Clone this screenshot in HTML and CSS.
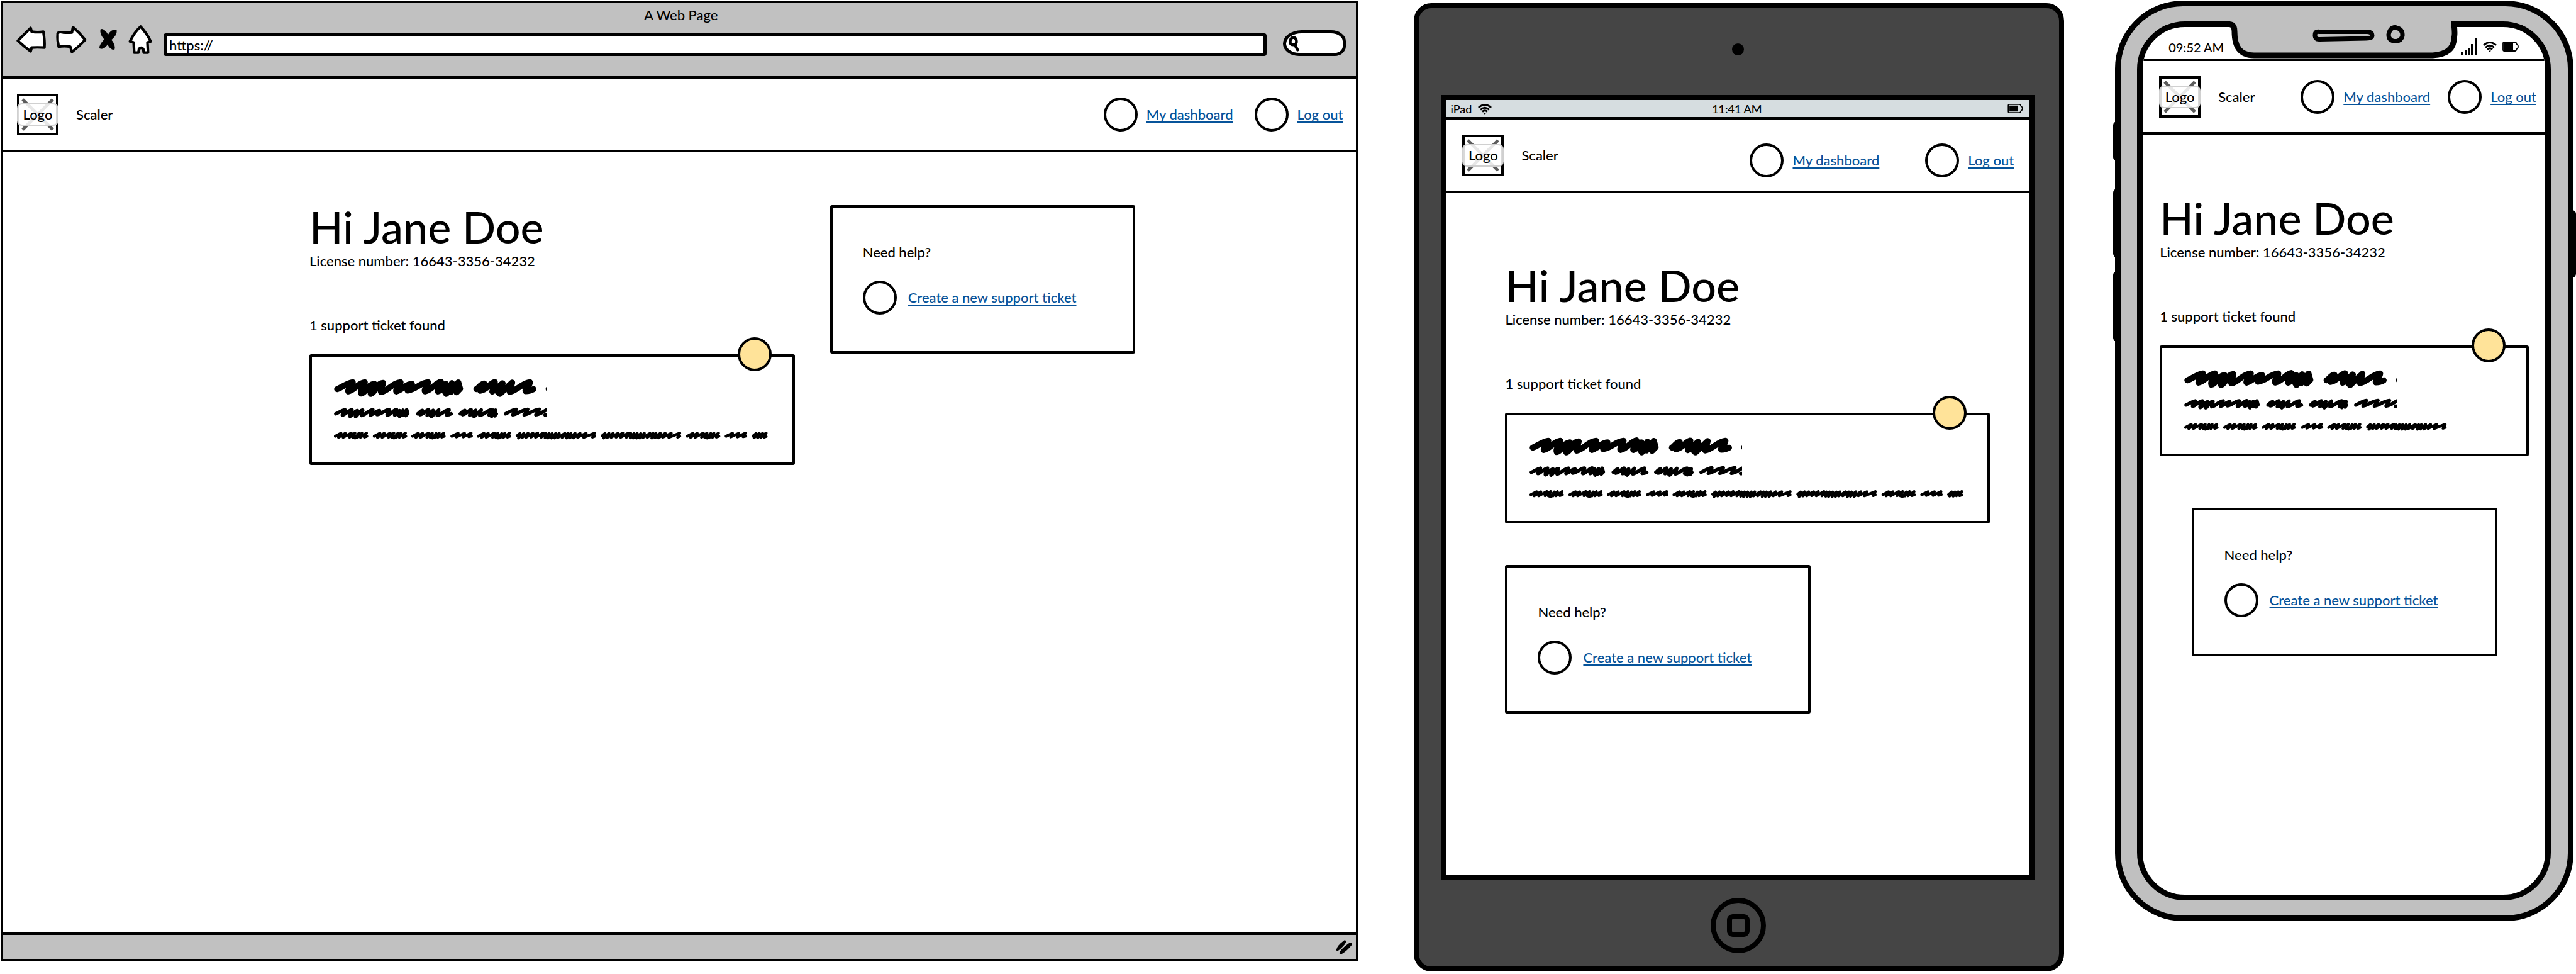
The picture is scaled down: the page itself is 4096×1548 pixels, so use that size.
FILE: index.html
```html
<!DOCTYPE html>
<html lang="en">
<head>
<meta charset="utf-8">
<title>Scaler dashboard wireframes</title>
<link rel="stylesheet" href="styles.css">
</head>
<body>
<svg class="sprite" aria-hidden="true">
  <symbol id="wifi" viewBox="0 0 24 18">
    <path d="M2 7Q12 -2 22 7M5 10.500Q12 4 19 10.500M8 13.500Q12 10 16 13.500" fill="none" stroke="#000" stroke-width="3"/>
    <path d="M10 15.500h4L12 18z"/>
  </symbol>
  <symbol id="battery" viewBox="0 0 26 16">
    <path d="M3 1H20Q22 1 22.500 4Q25 5 25 8T22.500 12Q22 15 20 15H3Q1 15 1 13V3Q1 1 3 1Z" fill="none" stroke="#000" stroke-width="1.800"/>
    <path d="M3 3H17V13H3Z"/>
  </symbol>
  <g id="word-long"><path d="M42 94C70 84 100 58 130 55C130 75 100 95 105 107C140 100 160 60 198 55C195 80 170 100 178 119C210 110 215 68 252 64C252 85 226 105 232 121C262 110 262 62 302 59C300 80 280 95 290 111C330 105 350 60 400 55C400 75 370 95 376 107C410 98 430 65 464 64C462 80 436 92 440 102C490 95 510 58 555 55C556 75 530 95 538 107C580 98 595 58 628 53C626 75 604 95 610 107C635 100 640 70 656 64L645 100L658 121L690 60L684 110L726 56L736 92L716 112"/></g>
  <g id="word-mid"><path d="M828 94C845 84 850 66 872 62L850 103C890 98 900 62 932 54L918 108L976 61L945 105L961 121L1030 57L1016 110C1060 100 1090 58 1130 55C1132 75 1100 93 1106 106Q1130 105 1150 94"/></g>
  <g id="dash-a"><path d="M32 361L64 344L50 367L88 344L76 367L122 343L112 367L143 343L130 367L143 371L164 345L156 368L182 343L174 367L208 343L196 366L210 361"/></g>
  <g id="dash-b"><path d="M8 361L44 344L34 365L80 344L72 365L117 343L104 364L119 360"/></g>
  <g id="dash-c"><path d="M8 358L24 345L16 371L46 344L36 368L70 344L58 367L98 344L86 366L124 343L112 367L156 343L144 367L170 345L166 370L188 345L182 371L206 345L202 371L226 345L220 371L246 344L238 368L278 344L262 367L296 345L288 371L312 345L306 370L336 344L326 370L364 344L350 367L398 344L384 367L446 343L434 366L446 361"/></g>
  <g id="dash-d"><path d="M8 360L26 345L14 369L44 345L34 369L62 344L52 367L82 343L70 366L82 362"/></g>
  <symbol id="scribble-head" viewBox="24 36 1200 230">
    <g fill="none" stroke="#000" stroke-linecap="round" stroke-linejoin="round" stroke-width="34">
      <use href="#word-long"/><use href="#word-mid"/><path d="M1236 93h1"/>
      <g transform="translate(10 178) scale(.585)"><use href="#word-long"/></g>
      <g transform="translate(13 178) scale(.585)"><use href="#word-mid"/></g>
      <g transform="translate(253 178) scale(.585)"><use href="#word-mid"/><path d="M1106 106L1150 60L1130 118L1170 60L1160 115L1175 95"/></g>
      <g stroke-width="20"><path d="M993 233C1010 226 1030 210 1053 208L1034 239C1060 236 1085 210 1118 208L1098 239C1125 236 1150 210 1183 208L1164 239C1190 236 1200 222 1230 208M1216 240h14"/></g>
    </g>
  </symbol>
  <g id="scribble-body" fill="none" stroke="#000" stroke-linecap="round" stroke-linejoin="round" stroke-width="16">
    <use href="#dash-a"/><use href="#dash-a" x="220"/><use href="#dash-a" x="437"/><use href="#dash-b" x="682"/><use href="#dash-a" x="808"/><use href="#dash-c" x="1051"/><use href="#dash-c" x="1532"/><use href="#dash-a" x="1989"/><use href="#dash-b" x="2232"/><use href="#dash-d" x="2384"/>
  </g>
</svg>

<div class="board">
  <section class="browser">
    <div class="chrome">
      <div class="chrome-title">A Web Page</div>
      <div class="toolbar">
        <div class="tools">
          <button type="button" aria-label="Back"><svg width="49" height="46" viewBox="30 46 58 54"><path class="ink" d="M34 75L58 51L60 58Q72 60 82 58Q85 76 84 88Q70 87 60 88L58 95Q46 86 34 75Z"/></svg></button>
          <button type="button" aria-label="Forward"><svg width="51" height="47" viewBox="104 46 60 56"><path class="ink" d="M108 63Q110 59 118 61Q128 62 135 61L137 51Q150 62 160 75Q148 88 135 98L132 88Q120 86 110 88Q107 76 108 63Z"/></svg></button>
          <button type="button" aria-label="Stop"><svg width="36" height="35" viewBox="182 50 42 42"><path d="M190 52Q197 50 204 63Q210 51 220 54Q221 63 210 72Q218 82 216 90Q209 92 203 80Q197 91 188 88Q187 82 197 71Q188 61 190 52Z" stroke="#000" stroke-width="1"/></svg></button>
          <button type="button" aria-label="Home"><svg width="41" height="49" viewBox="236 44 48 58"><path class="ink" d="M260 49Q272 62 279 77L273 79L274 98H266L265 91Q261 87 257 91L256 98H248L247 79L240 77Q248 60 260 49Z"/></svg></button>
        </div>
        <input class="address" type="text" aria-label="Address" value="https://">
        <label class="search"><svg width="18" height="27" viewBox="0 0 20 30"><path d="M10 5Q15 6 15 13Q14 19 9 18Q3 18 4 11Q5 5 10 5ZM12 18L17 27" fill="none" stroke="#000" stroke-width="5" stroke-linecap="round"/></svg><input type="text" aria-label="Search"></label>
      </div>
    </div>
    <header class="site-header">
      <div class="brand"><div class="logo"><svg viewBox="0 0 58 58"><path d="M5 5L53 53M53 5L5 53"/></svg><span>Logo</span></div><span>Scaler</span></div>
      <nav class="links"><span class="link-item"><i class="dot"></i><a href="#">My dashboard</a></span><span class="link-item"><i class="dot"></i><a href="#">Log out</a></span></nav>
    </header>
    <main class="content">
      <div class="account">
        <h1>Hi Jane Doe</h1>
        <p class="license">License number: 16643-3356-34232</p>
        <p class="count">1 support ticket found</p>
        <article class="ticket"><i class="dot badge"></i>
          <div class="scribble"><svg class="scribble-top"><use href="#scribble-head"/></svg><svg class="scribble-line" viewBox="24 336 2452 44"><use href="#scribble-body"/></svg></div>
        </article>
      </div>
      <aside class="help"><p>Need help?</p><span class="link-item"><i class="dot"></i><a href="#">Create a new support ticket</a></span></aside>
    </main>
    <footer class="statusbar"><svg width="28" height="24" viewBox="0 0 34 28"><path d="M2 20Q3 12 17 2Q21 2 16 9Q8 18 3 21ZM8 26Q9 20 27 7Q33 6 29 11Q19 23 9 28Z" stroke="#000" stroke-width="2"/></svg></footer>
  </section>

  <section class="tablet">
    <i class="lens"></i>
    <div class="screen">
      <div class="device-bar"><span class="carrier">iPad <svg width="24" height="18"><use href="#wifi"/></svg></span><span>11:41 AM</span><svg width="25" height="15"><use href="#battery"/></svg></div>
      <header class="site-header">
        <div class="brand"><div class="logo"><svg viewBox="0 0 58 58"><path d="M5 5L53 53M53 5L5 53"/></svg><span>Logo</span></div><span>Scaler</span></div>
        <nav class="links"><span class="link-item"><i class="dot"></i><a href="#">My dashboard</a></span><span class="link-item"><i class="dot"></i><a href="#">Log out</a></span></nav>
      </header>
      <main class="content">
        <div class="account">
          <h1>Hi Jane Doe</h1>
          <p class="license">License number: 16643-3356-34232</p>
          <p class="count">1 support ticket found</p>
          <article class="ticket"><i class="dot badge"></i>
            <div class="scribble"><svg class="scribble-top"><use href="#scribble-head"/></svg><svg class="scribble-line" viewBox="24 336 2452 44"><use href="#scribble-body"/></svg></div>
          </article>
        </div>
        <aside class="help"><p>Need help?</p><span class="link-item"><i class="dot"></i><a href="#">Create a new support ticket</a></span></aside>
      </main>
    </div>
    <button class="home" type="button" aria-label="Home"><i></i></button>
  </section>

  <section class="phone">
    <i class="side mute"></i><i class="side volume-up"></i><i class="side volume-down"></i><i class="side power"></i>
    <div class="case">
      <svg class="notch" width="370" height="66" viewBox="3540 30 370 66">
        <path d="M3546 30H3910V38Q3902 38 3902 46V60Q3902 89 3868 89H3584C3562 89 3553 75 3553 50Q3553 38 3546 38Z" fill="#c0c0c0"/>
        <path d="M3540 38.500H3545Q3553 39 3553 50C3553 75 3562 88 3584 88H3868Q3902 86 3902 60Q3904 56 3902 38.500H3910" fill="none" stroke="#000" stroke-width="9"/>
        <path d="M3688 50.500H3764Q3772 51 3772 56T3762 61L3688 62.500Q3681 63 3681 56T3688 50.500Z" fill="#c0c0c0" stroke="#000" stroke-width="7"/>
        <path d="M3808 43.500Q3821 46 3820 57Q3818 66 3807 65.500Q3798 64 3798 55Q3800 44 3808 43.500Z" fill="#c0c0c0" stroke="#000" stroke-width="7"/>
      </svg>
      <div class="screen">
        <div class="device-bar"><span>09:52 AM</span><span class="signals"><svg width="26" height="26" viewBox="0 0 26 26"><path d="M0 22h4v4H0zM6 19h3v7H6zM11 15h4v11h-4zM16 9h4v17h-4zM22 0h4v26h-4z"/></svg><svg width="24" height="18"><use href="#wifi"/></svg><svg width="26" height="16"><use href="#battery"/></svg></span></div>
        <header class="site-header">
          <div class="brand"><div class="logo"><svg viewBox="0 0 58 58"><path d="M5 5L53 53M53 5L5 53"/></svg><span>Logo</span></div><span>Scaler</span></div>
          <nav class="links"><span class="link-item"><i class="dot"></i><a href="#">My dashboard</a></span><span class="link-item"><i class="dot"></i><a href="#">Log out</a></span></nav>
        </header>
        <main class="content">
          <div class="account">
            <h1>Hi Jane Doe</h1>
            <p class="license">License number: 16643-3356-34232</p>
            <p class="count">1 support ticket found</p>
            <article class="ticket"><i class="dot badge"></i>
              <div class="scribble"><svg class="scribble-top"><use href="#scribble-head"/></svg><svg class="scribble-line short" viewBox="24 336 1491 44"><use href="#scribble-body"/></svg></div>
            </article>
          </div>
          <aside class="help"><p>Need help?</p><span class="link-item"><i class="dot"></i><a href="#">Create a new support ticket</a></span></aside>
        </main>
      </div>
    </div>
  </section>
</div>
</body>
</html>
```
FILE: styles.css
```css
* { box-sizing: border-box; }

body {
  margin: 0;
  background: #fff;
  color: #000;
  font: 500 22px/28px Lato, "Noto Sans", sans-serif;
}

h1, p { margin: 0; }
svg { display: block; flex: none; }
button { padding: 0; border: 0; background: none; }
a { color: #06539a; text-decoration: underline; text-decoration-thickness: 2px; text-underline-offset: 3px; text-decoration-skip-ink: none; }
.sprite { position: absolute; width: 0; height: 0; }
.ink { fill: #fff; stroke: #000; stroke-width: 5; stroke-linejoin: round; }

.board {
  display: grid;
  grid-template-columns: 2160fr 1044fr 736fr;
  column-gap: 78px;
  min-height: 100vh;
  padding-left: 1px;
}

/* Shared page parts */
.site-header {
  display: flex;
  align-items: center;
  justify-content: space-between;
  height: 117px;
  border-bottom: 4px solid #000;
  background: #fff;
}
.brand { display: flex; align-items: center; gap: 28px; }
.logo { display: grid; place-items: center; width: 66px; height: 66px; border: 4px solid #000; }
.logo svg { grid-area: 1 / 1; width: 58px; height: 58px; }
.logo path { stroke: #5c5c5c; stroke-width: 5; }
.logo span {
  z-index: 1;
  grid-area: 1 / 1;
  width: 66px;
  margin: 0 -4px;
  padding: 2px 0;
  border: 2px solid #d0d0d0;
  border-radius: 8px;
  background: rgba(255, 255, 255, .85);
  text-align: center;
}
.links { display: flex; gap: 34px; }
.link-item { display: flex; align-items: center; gap: 14px; white-space: nowrap; }
.dot { flex: none; width: 54px; height: 54px; border: 4px solid #000; border-radius: 50%; background: #fff; }
h1 { font-size: 70px; line-height: 68px; font-weight: 500; }
.license { margin-top: 7px; }
.count { margin: 74px 0 32px; }
.ticket, .help { border: 4px solid #000; border-radius: 3px; }
.ticket { position: relative; height: 176px; padding: 35px; }
.badge { position: absolute; top: -31px; right: 33px; background: #ffe399; }
.scribble { display: flex; flex-direction: column; gap: 19px; }
.scribble-top { width: 338px; height: 65px; }
.scribble-line { width: 690px; height: 13px; }
.scribble-line.short { width: 420px; }
.help { width: 100%; max-width: 486px; height: 236px; padding: 57px 48px 0; }
.help p { margin-bottom: 31px; }
.help .link-item { gap: 18px; }

/* Desktop browser */
.browser {
  display: flex;
  flex-direction: column;
  margin: 1px 0 20px;
  border: 4px solid #000;
  border-radius: 2px;
}
.chrome { height: 120px; padding: 5px 16px 0 20px; border-bottom: 5px solid #000; background: #c1c1c1; }
.chrome-title { text-align: center; }
.toolbar { display: flex; align-items: flex-end; height: 51px; }
.tools { display: flex; align-items: center; align-self: flex-start; gap: 14px; margin-right: 16px; }
.address {
  flex: 1;
  min-width: 0;
  height: 36px;
  margin-right: 26px;
  padding: 0 4px;
  border: 5px solid #000;
  border-radius: 4px;
  background: #fff;
  color: #000;
  font: inherit;
}
.search {
  display: flex;
  align-items: center;
  width: 100px;
  height: 41px;
  padding-left: 3px;
  border: 5px solid #000;
  border-radius: 30px 24px 18px 26px / 22px 18px 16px 20px;
  background: #fff;
}
.search input { width: 56px; min-width: 0; height: 24px; padding: 0; border: 0; background: none; font: inherit; }
.browser .site-header { padding: 0 21px 0 22px; }
.browser .content {
  display: grid;
  flex: 1;
  grid-template-columns: minmax(0, 772fr) minmax(0, 486fr);
  align-items: start;
  gap: 56px;
  padding: 84px 351px 0 487px;
}
.statusbar { display: flex; align-items: center; justify-content: flex-end; height: 43px; padding-right: 4px; border-top: 5px solid #000; background: #c1c1c1; }

/* Tablet */
.tablet {
  display: flex;
  flex-direction: column;
  align-items: center;
  margin: 5px 0 4px 10px;
  padding: 0 39px 0 36px;
  border: 8px solid #000;
  border-radius: 28px;
  background: #454545;
}
.lens { width: 19px; height: 19px; margin: 56px 0 63px; border-radius: 50%; background: #000; }
.tablet .screen { display: flex; flex: 1; flex-direction: column; width: 100%; border: 8px solid #000; background: #fff; }
.tablet .device-bar {
  display: grid;
  grid-template-columns: 1fr auto 1fr;
  align-items: center;
  height: 31px;
  padding: 0 10px 0 6px;
  border-bottom: 4px solid #000;
  background: #d6dde0;
  font-size: 18px;
  line-height: 24px;
}
.tablet .device-bar > svg { justify-self: end; }
.carrier { display: flex; align-items: center; gap: 9px; }
.tablet .site-header { padding: 0 25px 0 25px; }
.tablet .links { gap: 73px; padding-top: 17px; }
.tablet .content { padding: 112px 63px 0 93px; }
.tablet .help { margin-top: 66px; }
.home {
  display: grid;
  place-items: center;
  width: 88px;
  height: 88px;
  margin: 29px 0 21px;
  border: 8px solid #000;
  border-radius: 50%;
}
.home i { width: 36px; height: 36px; border: 8px solid #000; border-radius: 9px; }

/* Phone */
.phone { position: relative; display: flex; margin: 1px 0 84px; }
.case {
  position: relative;
  display: flex;
  flex: 1;
  min-width: 0;
  margin: 0 4px 0 3px;
  padding: 24px 27px 24px 26px;
  border: 9px solid #000;
  border-radius: 108px;
  background: #c0c0c0;
}
.phone .screen { flex: 1; min-width: 0; overflow: hidden; border: 9px solid #000; border-radius: 76px; background: #fff; }
.notch { position: absolute; top: 20px; left: 50%; margin-left: -188px; }
.phone .device-bar {
  display: flex;
  align-items: flex-end;
  justify-content: space-between;
  height: 54px;
  padding: 0 42px 6px 41px;
  border-bottom: 4px solid #000;
  font-size: 20px;
  line-height: 24px;
}
.signals { display: flex; align-items: center; gap: 8px; }
.phone .site-header { padding: 0 14px 0 26px; }
.phone .links { gap: 28px; }
.phone .content { padding: 98px 26px 0 27px; }
.phone .help { margin: 82px auto 0; }
.side { position: absolute; left: 0; width: 8px; border-radius: 6px 0 0 6px; background: #000; }
.mute { top: 192px; height: 63px; }
.volume-up { top: 299px; height: 109px; }
.volume-down { top: 430px; height: 112px; }
.power { top: 333px; right: 0; left: auto; height: 107px; border-radius: 0 6px 6px 0; }
```
